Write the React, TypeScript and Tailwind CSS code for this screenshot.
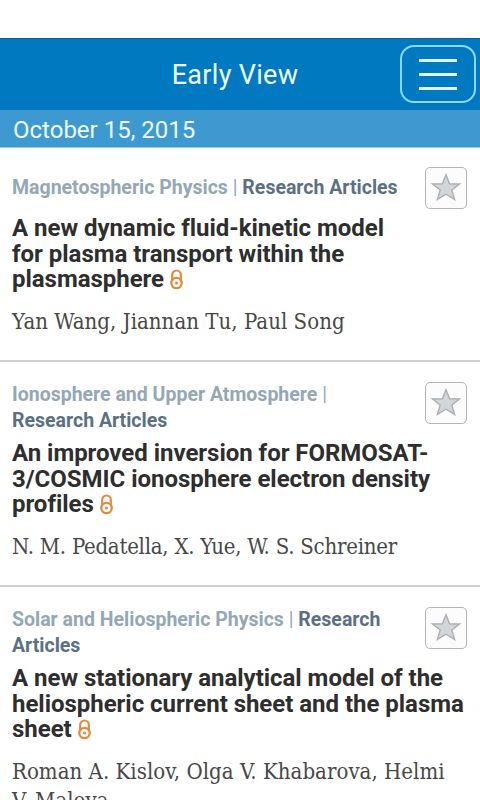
import React from "react";

type Article = {
  section: string;
  type: string[];
  typeOnFirstLine: boolean;
  title: string[];
  authors: string[];
  authorTracking: string;
};

const articles: Article[] = [
  {
    section: "Magnetospheric Physics",
    type: ["Research Articles"],
    typeOnFirstLine: true,
    title: ["A new dynamic fluid-kinetic model", "for plasma transport within the", "plasmasphere"],
    authors: ["Yan Wang, Jiannan Tu, Paul Song"],
    authorTracking: "tracking-[0.03px]",
  },
  {
    section: "Ionosphere and Upper Atmosphere",
    type: ["Research Articles"],
    typeOnFirstLine: false,
    title: ["An improved inversion for FORMOSAT-", "3/COSMIC ionosphere electron density", "profiles"],
    authors: ["N. M. Pedatella, X. Yue, W. S. Schreiner"],
    authorTracking: "tracking-[-0.24px]",
  },
  {
    section: "Solar and Heliospheric Physics",
    type: ["Research", "Articles"],
    typeOnFirstLine: true,
    title: ["A new stationary analytical model of the", "heliospheric current sheet and the plasma", "sheet"],
    authors: ["Roman A. Kislov, Olga V. Khabarova, Helmi", "V. Malova"],
    authorTracking: "tracking-[0.03px]",
  },
];

function OpenAccessIcon() {
  return (
    <svg width="13" height="21" viewBox="0 0 13 21" fill="none" className="ml-[6px] inline-block align-[-3px]">
      <circle cx="6.5" cy="14" r="5.2" stroke="#e08c3c" strokeWidth="2.3" />
      <path d="M2.2 12V5.8a4.3 4.3 0 0 1 8.6 0V12" stroke="#e08c3c" strokeWidth="2.2" />
      <circle cx="6.5" cy="14" r="1.6" fill="#e08c3c" />
    </svg>
  );
}

function StarButton() {
  return (
    <button className="flex h-[42px] w-[42px] shrink-0 items-center justify-center rounded-[5px] border border-[#b4b6b9] bg-[#fcfcfc]">
      <svg width="32" height="30" viewBox="0 0 32 30">
        <path
          d="M16 1.7 19.6 10.7 29.6 11 21.8 17 24.6 26.4 16 21.2 7.4 26.4 10.2 17 2.4 11 12.4 10.7Z"
          fill="#d3d6d8"
          stroke="#abafb3"
          strokeWidth="1.4"
        />
      </svg>
    </button>
  );
}

function ArticleRow({ article, first }: { article: Article; first: boolean }) {
  const { section, type, typeOnFirstLine, title, authors, authorTracking } = article;

  return (
    <article className={`relative border-b-2 border-[#d0d0d0] pl-3 pb-[24.5px] ${first ? "pt-[27px]" : "pt-[20px]"}`}>
      <div className={`absolute right-[13px] ${first ? "top-[19px]" : "top-[20px]"}`}>
        <StarButton />
      </div>

      <div className="whitespace-nowrap text-[19.5px] font-bold leading-[26px] text-[#5b7084]">
        <span className="text-[#94a7b7]">
          {section} <span className="font-normal">|</span>
        </span>
        {typeOnFirstLine ? " " : <br />}
        {type.map((line) => (
          <React.Fragment key={line}>
            {line}
            <br />
          </React.Fragment>
        ))}
      </div>

      <h2
        className={`whitespace-nowrap text-2xl font-bold leading-[25.5px] tracking-[-0.03px] text-[#2e2e2e] [font-variant-ligatures:none] ${first ? "mt-[15px]" : "mt-[7px]"}`}
      >
        {title.map((line, i) => (
          <span key={line} className="block h-[25.5px]">
            {line}
            {i === title.length - 1 && <OpenAccessIcon />}
          </span>
        ))}
      </h2>

      <p
        className={`mt-[14px] whitespace-nowrap font-['DejaVu_Serif_Condensed','DejaVu_Serif',serif] text-[22px] leading-[29px] text-[#484848] [font-stretch:condensed] ${authorTracking}`}
      >
        {authors.map((line) => (
          <span key={line} className="block">
            {line}
          </span>
        ))}
      </p>
    </article>
  );
}

export default function App() {
  return (
    <div className="h-[800px] w-[480px] overflow-hidden bg-white pt-[38px] font-['Roboto',sans-serif]">
      {/* Top bar */}
      <header className="flex h-[72px] items-start border-t border-[#055f98] bg-[#0079c1] pr-1 pt-[6px]">
        <h1 className="flex-1 pl-[70px] pt-[14px] text-center text-[27px] leading-8 tracking-[0.3px] text-[#effcff]">
          Early View
        </h1>
        <button className="flex h-[58px] w-[76px] flex-col items-center justify-center gap-[11px] rounded-[14px] border-2 border-[#8fd8fb]">
          <span className="h-[3px] w-[38px] bg-[#dcfaff]" />
          <span className="h-[3px] w-[38px] bg-[#dcfaff]" />
          <span className="h-[3px] w-[38px] bg-[#dcfaff]" />
        </button>
      </header>

      <div className="flex h-[38px] items-center border-b border-[#9accea] bg-[#3d99d0] pl-[13px] pt-[2px] text-2xl text-[#effcff]">
        October 15, 2015
      </div>

      <main>
        {articles.map((article, i) => (
          <ArticleRow key={article.section} article={article} first={i === 0} />
        ))}
      </main>
    </div>
  );
}
